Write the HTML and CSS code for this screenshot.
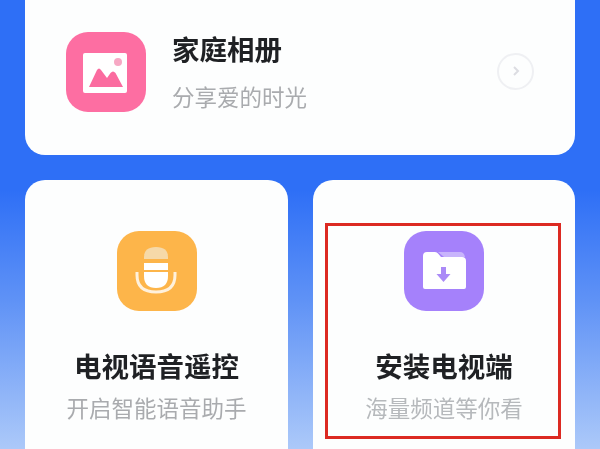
FILE: index.html
```html
<!DOCTYPE html>
<html lang="zh-CN">
<head>
    <meta charset="UTF-8">
    <meta name="viewport" content="width=device-width, initial-scale=1.0">
    <title>家庭相册</title>
    <link rel="stylesheet" href="styles.css">
</head>
<body>
    <main class="page">
        <section class="card album">
            <div class="icon icon-pink">
                <svg width="80" height="80" viewBox="0 0 80 80">
                    <rect x="17" y="21" width="44" height="40" rx="2" fill="#fff"/>
                    <circle cx="52" cy="30" r="4" fill="#f7a8c4"/>
                    <path d="M23 55 L31 38 Q33 35 35 38 L41 46 L44.500 41 Q47 38 49.500 41 L57 55 Z" fill="#fb6b9f"/>
                </svg>
            </div>
            <div class="album-text">
                <h2 class="title">家庭相册</h2>
                <p class="sub">分享爱的时光</p>
            </div>
            <div class="arrow">
                <svg width="12" height="14" viewBox="0 0 12 14">
                    <path d="M4 3 L8 7 L4 11" fill="none" stroke="#dcdde2" stroke-width="2"/>
                </svg>
            </div>
        </section>
        <div class="row">
            <section class="card tile">
                <div class="icon icon-orange">
                    <svg width="80" height="80" viewBox="0 0 80 80">
                        <path d="M27 26 Q27 16 39 16 Q51 16 51 26 V28 H27 Z" fill="#f6d9a8"/>
                        <rect x="27" y="32" width="24" height="7" fill="#fff"/>
                        <path d="M27 41 H51 V45 Q51 57 39 57 Q27 57 27 45 Z" fill="#fff"/>
                        <path d="M20 41 V44 Q20 61 39 61 Q58 61 58 44 V41" fill="none" stroke="#fff1dc" stroke-width="3"/>
                    </svg>
                </div>
                <h2 class="title">电视语音遥控</h2>
                <p class="sub">开启智能语音助手</p>
            </section>
            <section class="card tile">
                <div class="icon icon-purple">
                    <svg width="80" height="80" viewBox="0 0 80 80">
                        <path d="M34 21 H56 Q60 21 61 26 L40 26 Z" fill="#c8b4fc"/>
                        <path d="M19 25 Q19 21 23 21 H31 Q33 21 34.500 23 L37 26 H58 Q62 26 62 30 V56 Q62 58 60 58 H21 Q19 58 19 56 Z" fill="#fff"/>
                        <path d="M37 36 H42 V43 H46.500 L39.500 51 L32.500 43 H37 Z" fill="#ab8af7"/>
                    </svg>
                </div>
                <h2 class="title">安装电视端</h2>
                <p class="sub sub-light">海量频道等你看</p>
                <div class="mark"></div>
            </section>
        </div>
    </main>
</body>
</html>
```

FILE: styles.css
```css
html, body {
    margin: 0;
    padding: 0;
}

body {
    font-family: "Noto Sans CJK SC", "Noto Sans", sans-serif;
    height: 449px;
    overflow: hidden;
    background-color: #2e6ff6;
}

/* the source is a soft, upscaled photo, so everything is a little blurred */
.page {
    height: 449px;
    padding: 0 25px;
    box-sizing: border-box;
    overflow: hidden;
    background: linear-gradient(to bottom, #2e6ff6 0, #2e6ff6 190px, #5f92f6 300px, #acc9f9 449px);
    filter: blur(0.5px);
}

.card {
    background-color: #fdfefe;
    border-radius: 20px;
}

.album {
    display: flex;
    align-items: center;
    height: 185px;
    margin-top: -30px;
    padding: 19px 41px 0;
    box-sizing: border-box;
}

.album-text {
    flex-grow: 1;
    margin-left: 26px;
}

.icon {
    width: 80px;
    height: 80px;
    border-radius: 22px;
    flex-shrink: 0;
}

.icon svg {
    display: block;
}

.icon-pink {
    background-color: #fd6ea2;
}

.icon-orange {
    background-color: #fdb54a;
}

.icon-purple {
    background-color: #a581fb;
}

.title {
    margin: 0;
    font-size: 27.5px;
    font-weight: 700;
    line-height: 40px;
    color: #1f2124;
}

.sub {
    margin: 8px 0 0;
    font-size: 22.5px;
    line-height: 40px;
    color: #a9abae;
}

.sub-light {
    color: #b6b9bc;
}

.arrow {
    display: flex;
    align-items: center;
    justify-content: center;
    width: 33px;
    height: 33px;
    margin-top: -2px;
    margin-right: 0;
    border: 2px solid #eff0f3;
    border-radius: 50%;
}

.row {
    display: grid;
    grid-template-columns: 263px 262px;
    gap: 25px;
    margin-top: 25px;
}

.tile {
    position: relative;
    display: flex;
    flex-direction: column;
    align-items: center;
    height: 320px;
    padding-top: 51px;
    box-sizing: border-box;
}

.tile .title {
    margin-top: 34px;
}

.tile .sub {
    margin-top: 2px;
}

/* red annotation drawn over the card */
.mark {
    position: absolute;
    left: 12px;
    top: 43px;
    width: 236px;
    height: 216px;
    border: 3px solid #dc2a22;
    box-sizing: border-box;
}
```
